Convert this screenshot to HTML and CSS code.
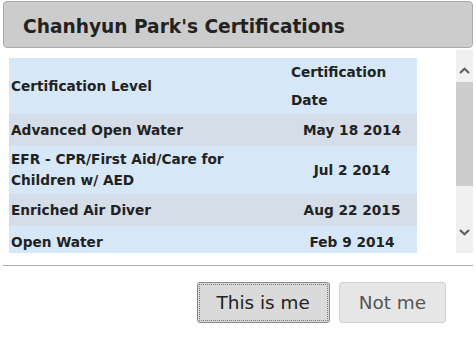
FILE: index.html
```html
<!DOCTYPE html>
<html lang="en">
<head>
    <meta charset="UTF-8">
    <title>Certifications</title>
    <link rel="stylesheet" href="styles.css">
</head>
<body>
    <div class="dialog">
        <div class="dialog-title">Chanhyun Park's Certifications</div>
        <div class="cert-panel">
            <div class="cert-scroll">
                <table class="cert-table">
                    <thead>
                        <tr>
                            <th class="col-level">Certification Level</th>
                            <th class="col-date">Certification Date</th>
                        </tr>
                    </thead>
                    <tbody>
                        <tr class="alt">
                            <td>Advanced Open Water</td>
                            <td class="date">May 18 2014</td>
                        </tr>
                        <tr>
                            <td>EFR - CPR/First Aid/Care for Children w/ AED</td>
                            <td class="date">Jul 2 2014</td>
                        </tr>
                        <tr class="alt">
                            <td>Enriched Air Diver</td>
                            <td class="date">Aug 22 2015</td>
                        </tr>
                        <tr>
                            <td>Open Water</td>
                            <td class="date">Feb 9 2014</td>
                        </tr>
                    </tbody>
                </table>
            </div>
            <div class="scrollbar">
                <div class="scroll-btn scroll-up">
                    <svg width="11" height="7" viewBox="0 0 11 7"><path d="M1 6 L5.5 1.8 L10 6" fill="none" stroke="#606060" stroke-width="2.2"/></svg>
                </div>
                <div class="scroll-thumb"></div>
                <div class="scroll-track"></div>
                <div class="scroll-btn scroll-down">
                    <svg width="11" height="7" viewBox="0 0 11 7"><path d="M1 1 L5.5 5.2 L10 1" fill="none" stroke="#606060" stroke-width="2.2"/></svg>
                </div>
            </div>
        </div>
        <div class="dialog-buttons">
            <button class="btn btn-focus">This is me</button>
            <button class="btn">Not me</button>
        </div>
    </div>
</body>
</html>
```

FILE: styles.css
```css
/* dialog */
body {
    margin: 0;
    background: #ffffff;
    color: #222;
    font-family: "DejaVu Sans", Verdana, sans-serif;
}
.dialog {
    padding: 1px 3px 0 3px;
}
.dialog-title {
    height: 47px;
    box-sizing: border-box;
    background: #cccccc;
    border: 1px solid #aaaaaa;
    border-radius: 4px;
    padding: 14px 0 0 19px;
    font-size: 18.6px;
    font-weight: bold;
    color: #222;
}

/* scrolling table */
.cert-panel {
    display: flex;
    margin-top: 2px;
    height: 203px;
}
.cert-scroll {
    flex: 1;
    overflow: hidden;
    padding: 8px 0 0 6px;
}
.scrollbar {
    width: 17px;
    background: #f0f0f0;
    display: flex;
    flex-direction: column;
}
.scroll-btn {
    display: flex;
    justify-content: center;
    align-items: flex-start;
}
.scroll-up {
    height: 32px;
}
.scroll-up svg {
    margin-top: 17px;
}
.scroll-down {
    height: 30px;
}
.scroll-down svg {
    margin-top: 6px;
}
.scroll-thumb {
    height: 104px;
    background: #cdcdcd;
}
.scroll-track {
    flex: 1;
}

.cert-table {
    width: 408px;
    border-collapse: collapse;
    background: #d6e8f7;
    font-size: 13.7px;
    font-weight: bold;
    color: #222;
}
.cert-table th {
    text-align: left;
    line-height: 28px;
    padding: 0 2px;
}
.cert-table .col-level {
    width: 274px;
}
.cert-table .col-date {
    padding-left: 4px;
}
.cert-table td {
    height: 26px;
    line-height: 21px;
    padding: 3px 2px;
}
.cert-table td.date {
    text-align: center;
}
.cert-table tr.alt {
    background: #d5dde9;
}

/* buttons */
.dialog-buttons {
    margin-top: 12px;
    border-top: 1px solid #aaaaaa;
    padding: 16px 27px 0 0;
    display: flex;
    justify-content: flex-end;
    gap: 9px;
}
.btn {
    height: 41px;
    padding: 0 19px;
    font-family: "DejaVu Sans", Tahoma, sans-serif;
    font-size: 18.4px;
    color: #555;
    background: #e6e6e6;
    border: 1px solid #d2d2d2;
    border-radius: 3px;
    cursor: pointer;
}
.btn-focus {
    color: #222;
    background: #dadada;
    border-color: #888888;
    outline: 1px dotted #777;
    outline-offset: -3px;
}
```
